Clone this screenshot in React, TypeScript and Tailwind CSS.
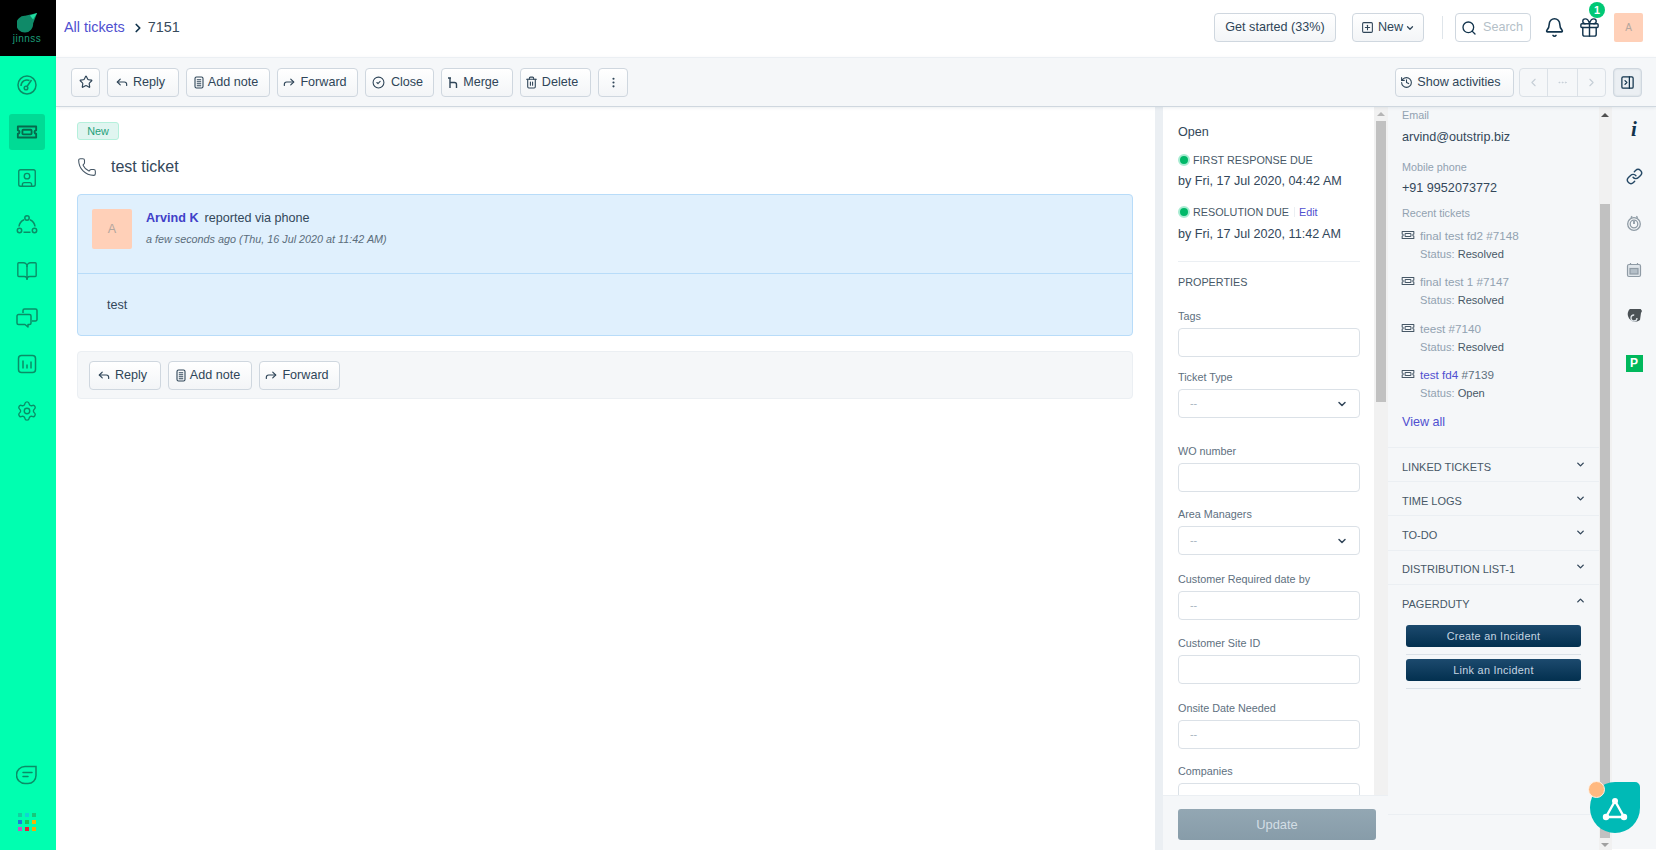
import React from "react";
import {
  Bell,
  BookOpen,
  ChevronDown,
  ChevronLeft,
  ChevronRight,
  ChevronUp,
  CircleCheck,
  Ellipsis,
  EllipsisVertical,
  Forward,
  Gift,
  History,
  Link,
  PanelRightClose,
  Phone,
  Reply,
  Search,
  Settings,
  SquarePlus,
  SquareUser,
  Star,
  Trash2,
} from "lucide-react";

const TicketIcon = ({ size = 24, stroke = 2 }: { size?: number; stroke?: number }) => (
  <svg width={size} height={size} viewBox="0 0 24 24" fill="none" stroke="currentColor" strokeWidth={stroke} strokeLinejoin="round">
    <path d="M2 6h20v4.200a1.800 1.800 0 0 0 0 3.600V18H2v-4.200a1.800 1.800 0 0 0 0-3.600z" />
    <rect x="7" y="9.500" width="10" height="5" rx="1" />
  </svg>
);

const NoteIcon = () => (
  <svg width="10" height="13" viewBox="0 0 10 13" fill="none" stroke="currentColor" strokeWidth="1.100">
    <rect x="1" y="1" width="8" height="11" rx="1.500" />
    <path d="M2.800 3.800h4.400M2.800 5.800h4.400M2.800 7.800h4.400M2.800 9.800h4.400" />
  </svg>
);

const MergeIcon = () => (
  <svg width="12" height="13" viewBox="0 0 12 13" fill="none" stroke="currentColor" strokeWidth="1.400">
    <path d="M1 2h3M3 2v10M3 6.500h4.500a2 2 0 0 1 2 2V12" />
  </svg>
);

const GaugeIcon = () => (
  <svg width="22" height="22" viewBox="0 0 22 22" fill="none" stroke="currentColor" strokeWidth="1.500">
    <circle cx="11" cy="11" r="9" />
    <path d="M5 12a6 6 0 0 1 8.500-5.500" />
    <circle cx="10" cy="14" r="1.800" />
    <path d="M11 12.500l4.500-6.500" />
  </svg>
);

const GroupIcon = () => (
  <svg width="22" height="22" viewBox="0 0 22 22" fill="none" stroke="currentColor" strokeWidth="1.500">
    <circle cx="11" cy="4" r="2.200" />
    <circle cx="3.500" cy="16.500" r="2.200" />
    <circle cx="18.500" cy="16.500" r="2.200" />
    <path d="M7.500 18.300h7M3 12.500a8.500 8.500 0 0 1 5-6.800M19 12.500a8.500 8.500 0 0 0-5-6.800" />
  </svg>
);

const ChatsIcon = () => (
  <svg width="22" height="22" viewBox="0 0 22 22" fill="none" stroke="currentColor" strokeWidth="1.500" strokeLinejoin="round">
    <path d="M7 6V3.500A1.500 1.500 0 0 1 8.500 2h11A1.500 1.500 0 0 1 21 3.500v9a1.500 1.500 0 0 1-1.500 1.500H16" />
    <path d="M2.500 7.500h11A1.500 1.500 0 0 1 15 9v7a1.500 1.500 0 0 1-1.500 1.500H12V20l-3-2.500H2.500A1.500 1.500 0 0 1 1 16V9a1.500 1.500 0 0 1 1.500-1.500z" />
  </svg>
);

const ChartIcon = () => (
  <svg width="22" height="22" viewBox="0 0 22 22" fill="none" stroke="currentColor" strokeWidth="1.500">
    <rect x="2.500" y="2.500" width="17" height="17" rx="3" />
    <path d="M7 7.500v8M11 11.500v4M15 8.500v7" />
  </svg>
);

const ChatIcon = () => (
  <svg width="22" height="22" viewBox="0 0 22 22" fill="none" stroke="currentColor" strokeWidth="1.500" strokeLinecap="round">
    <path d="M20 2.500H9a8 8 0 0 0 0 17h3a8 8 0 0 0 8-8z" />
    <path d="M7 8.500h9M7 12.500h5" />
  </svg>
);

const LogoMark = () => (
  <svg width="21" height="20" viewBox="0 0 26 25">
    <path d="M25 0L20 13A10.500 10.500 0 1 1 10 3.500Z" fill="#0f8a68" />
    <path d="M25 0L20 8L16 3Z" fill="#22dca0" />
  </svg>
);

const NetworkIcon = () => (
  <svg width="26" height="24" viewBox="0 0 26 24" fill="none" stroke="#fff" strokeWidth="2.400">
    <path d="M13 4L4 20h18z" />
    <circle cx="13" cy="4" r="3" fill="#fff" stroke="none" />
    <circle cx="4" cy="20" r="3.200" fill="#fff" stroke="none" />
    <circle cx="22" cy="20" r="3.200" fill="#fff" stroke="none" />
  </svg>
);

const Btn = ({
  icon,
  label,
  className,
  children,
}: {
  icon?: React.ReactNode;
  label?: string;
  className: string;
  children?: React.ReactNode;
}) => (
  <button
    className={`flex h-[29px] shrink-0 items-center justify-center gap-[4px] rounded-[4px] border border-[#cfd7df] bg-gradient-to-b from-white to-[#f3f5f7] text-[12.6px] text-[#2f4558] ${className}`}
  >
    {icon}
    {label}
    {children}
  </button>
);

const Avatar = ({ className }: { className: string }) => (
  <div className={`flex shrink-0 items-center justify-center rounded-[2px] bg-[#ffd0b8] text-[#b3a69e] ${className}`}>A</div>
);

const RailIcon = ({ children }: { children: React.ReactNode }) => (
  <div className="flex h-[46.5px] items-center justify-center">{children}</div>
);

const AppIcon = ({ children }: { children: React.ReactNode }) => (
  <div className="flex h-[46.8px] items-center justify-center">{children}</div>
);

const Sidebar = () => (
  <aside className="flex h-full w-[56px] shrink-0 flex-col bg-[#00ffb0] text-[#0a8d66]">
    <div className="flex h-[56px] flex-col items-center justify-center bg-black pr-[2px]">
      <LogoMark />
      <span className="mt-[1px] text-[10px] leading-[10px] tracking-[0.5px] text-[#1b9c78]">jinnss</span>
    </div>
    <div className="flex flex-col items-center pr-[2px] pt-[6px]">
      <RailIcon><GaugeIcon /></RailIcon>
      <RailIcon>
        <div className="flex h-[36px] w-[36px] items-center justify-center rounded-[3px] bg-[#00db95] text-[#06694c]">
          <TicketIcon size={22} />
        </div>
      </RailIcon>
      <RailIcon><SquareUser size={22} strokeWidth={1.5} /></RailIcon>
      <RailIcon><GroupIcon /></RailIcon>
      <RailIcon><BookOpen size={22} strokeWidth={1.5} /></RailIcon>
      <RailIcon><ChatsIcon /></RailIcon>
      <RailIcon><ChartIcon /></RailIcon>
      <RailIcon><Settings size={22} strokeWidth={1.5} /></RailIcon>
    </div>
    <div className="mt-auto flex flex-col items-center pb-[19px] pr-[2px]">
      <ChatIcon />
      <div className="mt-[27px] grid grid-cols-3 gap-[3px]">
        <span className="h-[4px] w-[4px] bg-[#12cfa0]" />
        <span className="h-[4px] w-[4px] bg-[#10d4d4]" />
        <span className="h-[4px] w-[4px] bg-[#18c77a]" />
        <span className="h-[4px] w-[4px] bg-[#1a7ed8]" />
        <span className="h-[4px] w-[4px] bg-[#16c65f]" />
        <span className="h-[4px] w-[4px] bg-[#f2b705]" />
        <span className="h-[4px] w-[4px] bg-[#c653c6]" />
        <span className="h-[4px] w-[4px] bg-[#e8203a]" />
        <span className="h-[4px] w-[4px] bg-[#f5a60a]" />
      </div>
    </div>
  </aside>
);

const TopBar = () => (
  <header className="flex h-[57px] shrink-0 items-center bg-white pb-[2px] pl-[8px] pr-[13px]">
    <span className="text-[14.4px] text-[#5050d0]">All tickets</span>
    <ChevronRight size={14} strokeWidth={3} className="ml-[6px] text-[#12344d]" />
    <span className="ml-[3px] text-[14.4px] text-[#374b5c]">7151</span>
    <Btn label="Get started (33%)" className="ml-auto w-[122px]" />
    <Btn icon={<SquarePlus size={13} />} label="New" className="ml-[16px] w-[72px]">
      <ChevronDown size={10} strokeWidth={3} className="-ml-[2px]" />
    </Btn>
    <div className="ml-[18px] h-[23px] w-px bg-[#dfe5ea]" />
    <div className="ml-[12px] flex h-[29px] w-[76px] items-center gap-[6px] rounded-[4px] border border-[#cfd7df] bg-white pl-[5px] text-[12.6px] text-[#b4bfc8]">
      <Search size={16} className="text-[#12344d]" />
      Search
    </div>
    <Bell size={21} strokeWidth={1.8} className="ml-[13px] text-[#12344d]" />
    <div className="relative ml-[13px]">
      <Gift size={23} strokeWidth={1.5} className="text-[#12344d]" />
      <span className="absolute -right-[4px] -top-[14px] flex h-[16px] w-[16px] items-center justify-center rounded-full bg-[#00c875] text-[10.8px] font-bold text-white">1</span>
    </div>
    <Avatar className="ml-[13px] h-[29px] w-[29px] text-[10px]" />
  </header>
);

const Toolbar = () => (
  <div className="relative flex h-[50px] shrink-0 items-center gap-[7px] border-b border-t border-b-[#cfd7df] border-t-[#ebeff3] bg-[#f5f7f9] pl-[15px] pr-[14px] shadow-[0_1px_3px_rgba(18,52,77,0.08)]">
    <Btn icon={<Star size={14} />} className="w-[29px]" />
    <Btn icon={<Reply size={14} />} label="Reply" className="w-[72px] pr-[6px]" />
    <Btn icon={<NoteIcon />} label="Add note" className="w-[84px] pr-[4px]" />
    <Btn icon={<Forward size={14} />} label="Forward" className="w-[81px] pr-[6px]" />
    <Btn icon={<CircleCheck size={13} />} label="Close" className="w-[69px] gap-[6px] pr-[4px]" />
    <Btn icon={<MergeIcon />} label="Merge" className="w-[72px] pr-[8px]" />
    <Btn icon={<Trash2 size={13} />} label="Delete" className="w-[71px] pr-[8px]" />
    <Btn icon={<EllipsisVertical size={13} />} className="w-[30px]" />
    <Btn icon={<History size={13} />} label="Show activities" className="ml-auto w-[119px] pr-[8px]" />
    <div className="ml-[-2px] flex h-[29px] w-[87px] items-stretch rounded-[4px] border border-[#dbe1e7] text-[#c5ced6]">
      <div className="flex w-[28px] items-center justify-center border-r border-[#dbe1e7]"><ChevronLeft size={13} /></div>
      <div className="flex w-[30px] items-center justify-center border-r border-[#dbe1e7]"><Ellipsis size={11} /></div>
      <div className="flex flex-1 items-center justify-center"><ChevronRight size={13} /></div>
    </div>
    <div className="flex h-[29px] w-[29px] items-center justify-center rounded-[4px] border border-[#cfd7df] bg-[#ebeff3] text-[#12344d] shadow-[inset_0_0_2px_rgba(18,52,77,0.15)]">
      <PanelRightClose size={15} />
    </div>
  </div>
);

const Conversation = () => (
  <main className="min-w-0 flex-1 overflow-hidden bg-white pl-[21px] pr-[22px] pt-[15px]">
    <span className="flex h-[18px] w-[42px] items-center justify-center rounded-[3px] border border-[#b5f0dc] bg-[#e0f5f0] text-[10.8px] text-[#24a07a]">New</span>
    <div className="mt-[17px] flex h-[20px] items-center text-[16px] text-[#33475a]">
      <Phone size={20} strokeWidth={1.3} className="text-[#475867]" />
      <span className="ml-[14px]">test ticket</span>
    </div>
    <section className="mt-[17px] rounded-[4px] border border-[#b8dcf9] bg-[#e0f0fd]">
      <div className="flex h-[79px] items-start border-b border-[#b8dcf9] pl-[14px] pt-[14px]">
        <Avatar className="h-[40px] w-[40px] text-[12.6px]" />
        <div className="ml-[14px]">
          <div className="text-[12.6px] leading-[18px] text-[#475867]">
            <span className="font-bold text-[#4040c8]">Arvind K</span>
            <span className="ml-[6px] text-[#33475a]">reported via phone</span>
          </div>
          <div className="mt-[4px] text-[10.8px] italic leading-[16px] text-[#5b6d7b]">a few seconds ago (Thu, 16 Jul 2020 at 11:42 AM)</div>
        </div>
      </div>
      <div className="h-[61px] pl-[29px] pt-[22px] text-[12.6px] leading-[18px] text-[#33475a]">test</div>
    </section>
    <div className="mt-[15px] flex h-[48px] items-center gap-[7px] rounded-[4px] border border-[#ebeff3] bg-[#f5f7f9] pl-[11px]">
      <Btn icon={<Reply size={14} />} label="Reply" className="w-[72px] pr-[6px]" />
      <Btn icon={<NoteIcon />} label="Add note" className="w-[84px] pr-[4px]" />
      <Btn icon={<Forward size={14} />} label="Forward" className="w-[81px] pr-[6px]" />
    </div>
  </main>
);

const Dot = () => (
  <span className="h-[12px] w-[12px] rounded-full border-[2px] border-[#a8ecd2] bg-[#00b868]" />
);

const fields = [
  { label: "Tags", gap: "mt-[18px]" },
  { label: "Ticket Type", gap: "mt-[12px]", select: true, dash: true },
  { label: "WO number", gap: "mt-[25px]" },
  { label: "Area Managers", gap: "mt-[14px]", select: true, dash: true },
  { label: "Customer Required date by", gap: "mt-[16px]", dash: true },
  { label: "Customer Site ID", gap: "mt-[15px]" },
  { label: "Onsite Date Needed", gap: "mt-[16px]", dash: true },
  { label: "Companies", gap: "mt-[14px]" },
];

const Properties = () => (
  <div className="flex h-full w-[225px] shrink-0 flex-col bg-white">
    <div className="flex min-h-0 flex-1">
      <div className="min-w-0 flex-1 overflow-hidden pl-[15px] pr-[14px] pt-[16px] text-[#33475a]">
        <div className="text-[12.6px] leading-[18px]">Open</div>
        <div className="mt-[11px] flex h-[16px] items-center gap-[3px] text-[10.8px] text-[#475867]">
          <Dot />
          FIRST RESPONSE DUE
        </div>
        <div className="mt-[4px] text-[12.6px] leading-[18px]">by Fri, 17 Jul 2020, 04:42 AM</div>
        <div className="mt-[14px] flex h-[16px] items-center gap-[3px] text-[10.8px] text-[#475867]">
          <Dot />
          RESOLUTION DUE
          <span className="ml-[2px] h-[10px] w-px bg-[#ebeff3]" />
          <span className="ml-[1px] text-[#5050d0]">Edit</span>
        </div>
        <div className="mt-[5px] text-[12.6px] leading-[18px]">by Fri, 17 Jul 2020, 11:42 AM</div>
        <div className="mt-[18px] border-t border-[#ebeff3]" />
        <div className="mt-[12px] text-[10.8px] leading-[16px] text-[#475867]">PROPERTIES</div>
        {fields.map((f) => (
          <div key={f.label} className={f.gap}>
            <div className="text-[10.8px] leading-[16px] text-[#5e7080]">{f.label}</div>
            <div className="mt-[4px] flex h-[29px] items-center justify-between rounded-[4px] border border-[#dbe1e7] bg-white pl-[11px] pr-[11px] text-[10.8px] text-[#a8b5c0]">
              <span>{f.dash ? "--" : ""}</span>
              {f.select && <ChevronDown size={12} strokeWidth={3} className="text-[#33475a]" />}
            </div>
          </div>
        ))}
      </div>
      <div className="flex w-[14px] shrink-0 flex-col items-center bg-[#f1f1f1] pt-[5px]">
        <span className="h-0 w-0 border-x-[4px] border-b-[4px] border-x-transparent border-b-[#b5b5b5]" />
        <div className="mt-[5px] h-[281px] w-[10px] bg-[#c1c1c1]" />
      </div>
    </div>
    <div className="flex h-[55px] shrink-0 items-start border-t border-[#ebeff3] bg-[#f5f7f9] pl-[15px] pt-[13px]">
      <button className="h-[31px] w-[198px] rounded-[3px] bg-gradient-to-b from-[#93a7b3] to-[#879ca9] text-[12.9px] text-[#d3dee5]">Update</button>
    </div>
  </div>
);

const recent = [
  { title: "final test fd2", id: "#7148", status: "Resolved" },
  { title: "final test 1", id: "#7147", status: "Resolved" },
  { title: "teest", id: "#7140", status: "Resolved" },
  { title: "test fd4", id: "#7139", status: "Open", link: true },
];

const Accordion = ({ label, open }: { label: string; open?: boolean }) => (
  <div className="flex h-[34.2px] items-center justify-between border-t border-[#ebeff3] pl-[14px] pr-[14px] pt-[5px] text-[11px] text-[#475867]">
    {label}
    {open ? <ChevronUp size={11} strokeWidth={3} className="-mt-[6px] mr-[-1px] text-[#33475a]" /> : <ChevronDown size={11} strokeWidth={3} className="-mt-[6px] mr-[-1px] text-[#33475a]" />}
  </div>
);

const Contact = () => (
  <div className="flex h-full w-[224px] shrink-0 bg-[#f5f7f9]">
    <div className="flex min-w-0 flex-1 flex-col overflow-hidden">
      <div className="pl-[14px]">
        <div className="text-[10.8px] leading-[16px] text-[#92a2b1]">Email</div>
        <div className="mt-[5px] text-[12.6px] leading-[18px] text-[#33475a]">arvind@outstrip.biz</div>
        <div className="mt-[13px] text-[10.8px] leading-[16px] text-[#92a2b1]">Mobile phone</div>
        <div className="mt-[4px] text-[12.6px] leading-[18px] text-[#33475a]">+91 9952073772</div>
        <div className="mt-[8px] text-[10.8px] leading-[16px] text-[#92a2b1]">Recent tickets</div>
        {recent.map((t) => (
          <div key={t.id} className="mt-[6.5px] flex h-[40px] gap-[5px]">
            <span className="-ml-[1px] text-[#475867]"><TicketIcon size={14} stroke={1.8} /></span>
            <div className="-mt-[1px] leading-[18px] text-[#92a2b1]">
              <div className={t.link ? "text-[11.7px] text-[#5e7080]" : "text-[11.7px]"}>
                <span className={t.link ? "text-[#5050d0]" : ""}>{t.title}</span> {t.id}
              </div>
              <div className="text-[11.1px]">Status: <span className="text-[#475867]">{t.status}</span></div>
            </div>
          </div>
        ))}
        <div className="mt-[6px] text-[12.6px] leading-[18px] text-[#5050d0]">View all</div>
      </div>
      <div className="mt-[16px] flex flex-col">
        <Accordion label="LINKED TICKETS" />
        <Accordion label="TIME LOGS" />
        <Accordion label="TO-DO" />
        <Accordion label="DISTRIBUTION LIST-1" />
        <Accordion label="PAGERDUTY" open />
      </div>
      <div className="mt-[7px] px-[18px] text-[10.8px] tracking-[0.3px] text-[#c5d6e2]">
        <div className="flex h-[22px] items-center justify-center rounded-[3px] bg-gradient-to-b from-[#1c4a6e] to-[#03304f]">Create an Incident</div>
        <div className="mt-[7px] h-px bg-[#dbe1e7]" />
        <div className="mt-[4px] flex h-[22px] items-center justify-center rounded-[3px] bg-gradient-to-b from-[#1c4a6e] to-[#03304f]">Link an Incident</div>
        <div className="mt-[7px] h-px bg-[#dbe1e7]" />
      </div>
      <div className="mb-[35px] mt-auto border-t border-[#ebeff3]" />
    </div>
    <div className="flex w-[13px] shrink-0 flex-col bg-[#f1f1f1] pl-[1px] pr-[2px] pt-[6px]">
      <span className="mx-auto h-0 w-0 border-x-[4px] border-b-[4px] border-x-transparent border-b-[#505050]" />
      <div className="mt-[87px] h-[634px] w-[10px] bg-[#c1c1c1]" />
      <span className="mx-auto mt-[5px] h-0 w-0 border-x-[4px] border-t-[4px] border-x-transparent border-t-[#a0a0a0]" />
    </div>
  </div>
);

const Apps = () => (
  <div className="-mt-[1px] flex h-full w-[44px] shrink-0 flex-col items-center self-start bg-[#f5f7f9]">
    <AppIcon><span className="[font-family:Liberation_Serif,serif] text-[21px] font-bold italic text-[#12344d]">i</span></AppIcon>
    <AppIcon><Link size={17} strokeWidth={2} className="text-[#264966]" /></AppIcon>
    <AppIcon>
      <svg width="16" height="16" viewBox="0 0 16 16" fill="none" stroke="#8f9ba5" strokeWidth="1.300">
        <circle cx="8" cy="9" r="6.300" />
        <circle cx="8" cy="9" r="3.800" />
        <path d="M8 6v3M5 1.500l1 1M11.500 1.500l-1 1" strokeWidth="1.800" />
      </svg>
    </AppIcon>
    <AppIcon>
      <svg width="16" height="16" viewBox="0 0 16 16" fill="#dfe5ea" stroke="#8f9ba5" strokeWidth="1.200">
        <rect x="1.500" y="2.500" width="13" height="12" rx="1.500" />
        <rect x="4" y="6.500" width="8" height="5.500" fill="#b4bfc8" />
        <path d="M4.500 1v2M11.500 1v2" />
      </svg>
    </AppIcon>
    <AppIcon>
      <svg width="16" height="16" viewBox="0 0 16 16">
        <path d="M16 2A7.500 7.500 0 1 0 14 11L15 4z" fill="#4b5256" />
        <circle cx="8" cy="9" r="3" fill="none" stroke="#dfe5ea" strokeWidth="1.300" strokeDasharray="14 5" />
      </svg>
    </AppIcon>
    <AppIcon>
      <div className="flex h-[17px] w-[17px] items-center justify-center bg-[#00b85c] text-[12px] font-bold leading-none text-white">P</div>
    </AppIcon>
  </div>
);

export default function App() {
  return (
    <div className="relative flex h-[850px] w-[1656px] overflow-hidden bg-white [font-family:Liberation_Sans,sans-serif] text-[#12344d]">
      <Sidebar />
      <div className="flex min-w-0 flex-1 flex-col">
        <TopBar />
        <Toolbar />
        <div className="flex min-h-0 flex-1">
          <Conversation />
          <div className="h-full w-[8px] shrink-0 bg-[#ebeff3]" />
          <Properties />
          <Contact />
          <Apps />
        </div>
      </div>
      <div className="absolute left-[1590px] top-[782px] flex h-[51px] w-[50px] items-center justify-center rounded-b-[25px] rounded-tl-[25px] rounded-tr-[5px] bg-[#00bab6] pt-[2px]">
        <NetworkIcon />
        <span className="absolute -left-[2px] -top-[1px] h-[17px] w-[17px] rounded-full border border-[#fff3e8] bg-[#ffb980]" />
      </div>
    </div>
  );
}
